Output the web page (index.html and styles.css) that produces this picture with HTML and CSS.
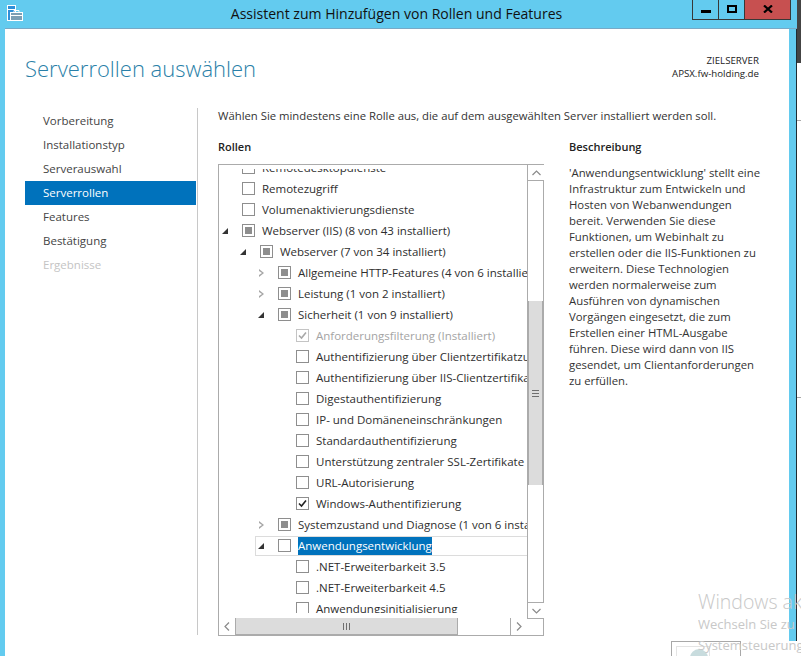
FILE: index.html
```html
<!DOCTYPE html>
<html lang="de">
<head>
<meta charset="utf-8">
<title>Assistent zum Hinzufügen von Rollen und Features</title>
<link rel="stylesheet" href="styles.css">
</head>
<body>
<div class="screen">
  <div class="window">
    <header class="titlebar">
      <svg class="app-icon" width="16" height="16" viewBox="0 0 16 16">
        <rect x="0.5" y="0.5" width="8" height="15" fill="#2f8fd8" stroke="#fff"/>
        <rect x="1" y="4" width="7" height="1" fill="#fff"/>
        <rect x="3.5" y="7.5" width="12" height="8" fill="#7d9fb4" stroke="#fff"/>
        <path d="M7 7.5V5.5h5v2" fill="none" stroke="#fff"/>
        <rect x="4" y="10" width="11" height="1" fill="#fff"/>
      </svg>
      <div class="title">Assistent zum Hinzufügen von Rollen und Features</div>
      <div class="controls">
        <div class="ctl ctl-min"><span class="glyph-min"></span></div>
        <div class="ctl ctl-max"><span class="glyph-max"></span></div>
        <div class="ctl ctl-close">
          <svg width="10" height="8" viewBox="0 0 10 8"><path d="M1 0.5 L9 7.5 M9 0.5 L1 7.5" stroke="#000" stroke-width="2.2" fill="none"/></svg>
        </div>
      </div>
    </header>
    <div class="frame">
      <main class="client">
        <div class="head">
          <h1 class="page-title">Serverrollen auswählen</h1>
          <div class="target">
            <div>ZIELSERVER</div>
            <div>APSX.fw-holding.de</div>
          </div>
        </div>
        <div class="cols">
          <nav class="nav">
            <div class="nav-item">Vorbereitung</div>
            <div class="nav-item">Installationstyp</div>
            <div class="nav-item">Serverauswahl</div>
            <div class="nav-item is-active">Serverrollen</div>
            <div class="nav-item">Features</div>
            <div class="nav-item">Bestätigung</div>
            <div class="nav-item is-disabled">Ergebnisse</div>
          </nav>
          <section class="panel">
            <p class="intro">Wählen Sie mindestens eine Rolle aus, die auf dem ausgewählten Server installiert werden soll.</p>
            <div class="split">
              <div class="roles">
                <h2 class="label">Rollen</h2>
                <div class="listbox">
                  <div class="viewport">
                    <div class="tree">
                      <div class="row l0"><i class="arrow"></i><i class="box"></i><span class="txt">Remotedesktopdienste</span></div>
                      <div class="row l0"><i class="arrow"></i><i class="box"></i><span class="txt">Remotezugriff</span></div>
                      <div class="row l0"><i class="arrow"></i><i class="box"></i><span class="txt">Volumenaktivierungsdienste</span></div>
                      <div class="row l0"><i class="arrow open"></i><i class="box part"></i><span class="txt">Webserver (IIS) (8 von 43 installiert)</span></div>
                      <div class="row l1"><i class="arrow open"></i><i class="box part"></i><span class="txt">Webserver (7 von 34 installiert)</span></div>
                      <div class="row l2"><i class="arrow closed"></i><i class="box part"></i><span class="txt">Allgemeine HTTP-Features (4 von 6 installiert)</span></div>
                      <div class="row l2"><i class="arrow closed"></i><i class="box part"></i><span class="txt">Leistung (1 von 2 installiert)</span></div>
                      <div class="row l2"><i class="arrow open"></i><i class="box part"></i><span class="txt">Sicherheit (1 von 9 installiert)</span></div>
                      <div class="row l3 is-dim"><i class="arrow"></i><i class="box dim"><svg width="11" height="11" viewBox="0 0 11 11"><path d="M2 5.5 L4.5 8 L9 2.5" fill="none" stroke="#a8a8a8" stroke-width="1.6"/></svg></i><span class="txt">Anforderungsfilterung (Installiert)</span></div>
                      <div class="row l3"><i class="arrow"></i><i class="box"></i><span class="txt">Authentifizierung über Clientzertifikatzuordnung</span></div>
                      <div class="row l3"><i class="arrow"></i><i class="box"></i><span class="txt">Authentifizierung über IIS-Clientzertifikatzuordnung</span></div>
                      <div class="row l3"><i class="arrow"></i><i class="box"></i><span class="txt">Digestauthentifizierung</span></div>
                      <div class="row l3"><i class="arrow"></i><i class="box"></i><span class="txt">IP- und Domäneneinschränkungen</span></div>
                      <div class="row l3"><i class="arrow"></i><i class="box"></i><span class="txt">Standardauthentifizierung</span></div>
                      <div class="row l3"><i class="arrow"></i><i class="box"></i><span class="txt">Unterstützung zentraler SSL-Zertifikate</span></div>
                      <div class="row l3"><i class="arrow"></i><i class="box"></i><span class="txt">URL-Autorisierung</span></div>
                      <div class="row l3"><i class="arrow"></i><i class="box"><svg width="11" height="11" viewBox="0 0 11 11"><path d="M2 5.5 L4.5 8 L9 2.5" fill="none" stroke="#222" stroke-width="1.6"/></svg></i><span class="txt">Windows-Authentifizierung</span></div>
                      <div class="row l2"><i class="arrow closed"></i><i class="box part"></i><span class="txt">Systemzustand und Diagnose (1 von 6 installiert)</span></div>
                      <div class="row l2 is-selected"><i class="arrow open"></i><i class="box"></i><span class="txt">Anwendungsentwicklung</span></div>
                      <div class="row l3"><i class="arrow"></i><i class="box"></i><span class="txt">.NET-Erweiterbarkeit 3.5</span></div>
                      <div class="row l3"><i class="arrow"></i><i class="box"></i><span class="txt">.NET-Erweiterbarkeit 4.5</span></div>
                      <div class="row l3"><i class="arrow"></i><i class="box"></i><span class="txt">Anwendungsinitialisierung</span></div>
                    </div>
                  </div>
                  <div class="vbar">
                    <div class="sb-btn sb-v"><svg width="9" height="6" viewBox="0 0 9 6"><path d="M0.5 5 L4.5 1 L8.5 5" fill="none" stroke="#8a8a8a" stroke-width="1.2"/></svg></div>
                    <div class="vtrack">
                      <div class="vthumb"><span class="grip-h"></span></div>
                    </div>
                    <div class="sb-btn sb-v sb-down"><svg width="9" height="6" viewBox="0 0 9 6"><path d="M0.5 1 L4.5 5 L8.5 1" fill="none" stroke="#8a8a8a" stroke-width="1.2"/></svg></div>
                  </div>
                  <div class="hbar">
                    <div class="sb-btn sb-h"><svg width="6" height="9" viewBox="0 0 6 9"><path d="M5 0.5 L1 4.5 L5 8.5" fill="none" stroke="#8a8a8a" stroke-width="1.2"/></svg></div>
                    <div class="hthumb"><span class="grip-v"></span></div>
                    <div class="htrack"></div>
                    <div class="sb-btn sb-h sb-right"><svg width="6" height="9" viewBox="0 0 6 9"><path d="M1 0.5 L5 4.5 L1 8.5" fill="none" stroke="#8a8a8a" stroke-width="1.2"/></svg></div>
                  </div>
                </div>
              </div>
              <aside class="desc">
                <h2 class="label label-desc">Beschreibung</h2>
                <p class="desc-text">'Anwendungsentwicklung' stellt eine<br>Infrastruktur zum Entwickeln und<br>Hosten von Webanwendungen<br>bereit. Verwenden Sie diese<br>Funktionen, um Webinhalt zu<br>erstellen oder die IIS-Funktionen zu<br>erweitern. Diese Technologien<br>werden normalerweise zum<br>Ausführen von dynamischen<br>Vorgängen eingesetzt, die zum<br>Erstellen einer HTML-Ausgabe<br>führen. Diese wird dann von IIS<br>gesendet, um Clientanforderungen<br>zu erfüllen.</p>
              </aside>
            </div>
          </section>
        </div>
      </main>
      <div class="rail"></div>
    </div>
  </div>
  <div class="desk">
    <div class="desk-block"></div>
    <div class="desk-tick tick-a"></div>
    <div class="desk-tick tick-b"></div>
  </div>
  <div class="tile"><span class="tile-inner"><span class="tile-dot"></span></span></div>
  <div class="watermark">
    <div class="wm-big">Windows aktivieren</div>
    <div class="wm-small">Wechseln Sie zu</div>
    <div class="wm-small">Systemsteuerung</div>
  </div>
</div>
</body>
</html>
```
FILE: styles.css
```css
* { box-sizing: border-box; }
html, body { margin: 0; padding: 0; }
body { width: 801px; height: 656px; overflow: hidden; background: #fff; font-family: "Open Sans", "Noto Sans", sans-serif; font-size: 11.5px; color: #222; }
h1, h2, p { margin: 0; }
i { font-style: normal; display: block; }

.screen { position: relative; display: flex; width: 801px; height: 656px; overflow: hidden; border-left: 5px solid #63cbef; background: #fff; }
.window { display: flex; flex-direction: column; width: 792px; height: 641px; flex: none; }

.titlebar { display: flex; height: 29px; flex: none; background: #63cbef; border-bottom: 1px solid #78a9c6; }
.app-icon { margin: 5px 2px 0 2px; flex: none; }
.title { flex: 1; padding: 5px 0 0 76px; text-align: center; font-size: 14.04px; line-height: 18px; color: #111; white-space: nowrap; }
.controls { display: flex; height: 20px; margin-right: 6px; border: 1px solid #383838; border-top: 0; flex: none; }
.ctl { display: flex; align-items: center; justify-content: center; height: 19px; background: #63cbef; }
.ctl-min { width: 26px; border-right: 1px solid #383838; }
.ctl-max { width: 26px; border-right: 1px solid #383838; }
.ctl-close { width: 45px; background: #c75050; }
.glyph-min { display: block; width: 10px; height: 3px; margin-top: 4px; background: #000; }
.glyph-max { display: block; width: 10px; height: 8px; border: 2px solid #000; margin-top: -2px; }
.ctl-close svg { margin-top: -2px; }

.frame { display: flex; flex: 1; min-height: 0; }
.client { width: 784px; flex: none; background: #fff; padding-top: 1px; }
.rail { flex: 1; background: #63cbef; border-right: 1px solid #1e2c33; }

.head { display: flex; justify-content: space-between; height: 78px; padding: 0 30px 0 20px; }
.page-title { margin-top: 23px; font-size: 22px; line-height: 30px; font-weight: 300; color: #2a7fa8; white-space: nowrap; }
.target { margin-top: 24px; text-align: right; font-size: 9.7px; line-height: 13px; color: #222; }

.cols { display: flex; height: 527px; }
.nav { width: 171px; margin-left: 20px; flex: none; padding-top: 1px; }
.nav-item { height: 24px; padding-left: 18px; line-height: 24px; color: #444; }
.nav-item.is-active { background: #0072bc; color: #fff; }
.nav-item.is-disabled { color: #c4c4c4; }

.panel { flex: 1; margin-left: 1px; padding-left: 20px; border-left: 1px solid #c8c8c8; }
.intro { height: 16px; font-size: 11.3px; line-height: 16px; color: #333; white-space: nowrap; margin-bottom: 15px; }
.split { display: flex; }
.roles { width: 326px; flex: none; }
.label { height: 27px; font-size: 11px; line-height: 16px; font-weight: 600; color: #222; }
.listbox { display: grid; grid-template-columns: 308px 17px; grid-template-rows: 453px 17px; width: 326px; height: 472px; margin-top: -2px; border: 1px solid #ababab; }
.viewport { overflow: hidden; clip-path: inset(4px 0 5px 0); }
.tree { margin-top: -8px; }
.row { display: flex; align-items: center; height: 21px; white-space: nowrap; color: #2e2e2e; }
.row.l0 { padding-left: 3px; }
.row.l1 { padding-left: 21px; }
.row.l2 { padding-left: 39px; }
.row.l3 { padding-left: 57px; }
.arrow { position: relative; width: 7px; height: 7px; margin-right: 13px; flex: none; }
.arrow.open { width: 0; height: 0; margin-right: 20px; }
.arrow.open::before { content: ""; position: absolute; left: 0; top: -3px; border-style: solid; border-width: 0 0 6px 6px; border-color: transparent transparent #333 transparent; }
.arrow.closed { width: 0; height: 0; margin-right: 20px; }
.arrow.closed::before { content: ""; position: absolute; left: 1px; top: -4px; border-style: solid; border-width: 4px 0 4px 5px; border-color: transparent transparent transparent #a6a6a6; }
.arrow.closed::after { content: ""; position: absolute; left: 1px; top: -2px; border-style: solid; border-width: 2px 0 2px 3px; border-color: transparent transparent transparent #fff; }
.box { display: flex; align-items: center; justify-content: center; width: 13px; height: 13px; flex: none; background: #fff; border: 1px solid #8e8e8e; }
.box.part::after { content: ""; width: 7px; height: 7px; background: #8e8e8e; }
.box.dim { border-color: #c4c4c4; }
.txt { margin-left: 7px; line-height: 18px; }
.is-dim .txt { color: #a4a4a4; }
.is-selected { position: relative; }
.is-selected::before { content: ""; position: absolute; left: 36px; right: 0; top: 1px; bottom: 0; border: 1px solid #dcdcdc; border-right: 0; }
.is-selected .txt { position: relative; background: #0072bc; color: #fff; }

.vbar { display: flex; flex-direction: column; border-left: 1px solid #ababab; border-bottom: 1px solid #ababab; margin-bottom: -1px; width: 17px; }
.sb-v { height: 16px; flex: none; border-bottom: 1px solid #ababab; }
.sb-down { border-bottom: 0; border-top: 1px solid #ababab; }
.sb-btn { display: flex; align-items: center; justify-content: center; background: #fff; }
.vtrack { flex: 1; padding-top: 120px; padding-bottom: 117px; }
.vthumb { display: flex; align-items: center; justify-content: center; height: 100%; background: #dcdcdc; border-left: 1px solid #ababab; border-right: 2px solid #ababab; }
.grip-h { width: 7px; height: 7px; background: repeating-linear-gradient(to bottom, #6f6f6f 0 1px, transparent 1px 3px); }
.hbar { display: flex; grid-column: 1; grid-row: 2; height: 17px; }
.sb-h { width: 17px; flex: none; border-right: 1px solid #ababab; }
.hthumb { display: flex; align-items: center; justify-content: center; width: 222px; flex: none; background: #dcdcdc; border-right: 1px solid #ababab; border-bottom: 1px solid #ababab; }
.htrack { flex: 1; }
.sb-right { border-right: 0; border-left: 1px solid #ababab; width: 17px; }
.grip-v { width: 7px; height: 7px; background: repeating-linear-gradient(to right, #6f6f6f 0 1px, transparent 1px 3px); }

.desc { width: 195px; margin-left: 25px; flex: none; }
.desc-text { margin-top: -1px; font-size: 11.35px; line-height: 16px; color: #333; white-space: nowrap; }

.desk { position: relative; width: 4px; flex: none; }
.desk-block { height: 63px; background: #444; }
.desk-tick { position: absolute; left: 0; width: 4px; height: 1px; background: #aaa; }
.tick-a { top: 120px; }
.tick-b { top: 397px; }

.watermark { position: absolute; left: 693px; top: 590px; width: 103px; overflow: hidden; color: #c8c8c8; white-space: nowrap; }
.wm-big { font-size: 19.5px; line-height: 24px; font-weight: 300; }
.wm-small { font-size: 13px; line-height: 21px; }
.tile { position: absolute; left: 666px; top: 641px; width: 70px; height: 15px; border: 1px solid #a8a8a8; border-bottom: 0; background: #fff; }
.tile-inner { display: block; width: 34px; height: 14px; margin: 4px 0 0 4px; border: 1px solid #e4e4e4; border-bottom: 0; overflow: hidden; }
.tile-dot { display: block; width: 18px; height: 18px; margin: 2px 0 0 13px; border-radius: 50%; background: #c8dcde; }
```
